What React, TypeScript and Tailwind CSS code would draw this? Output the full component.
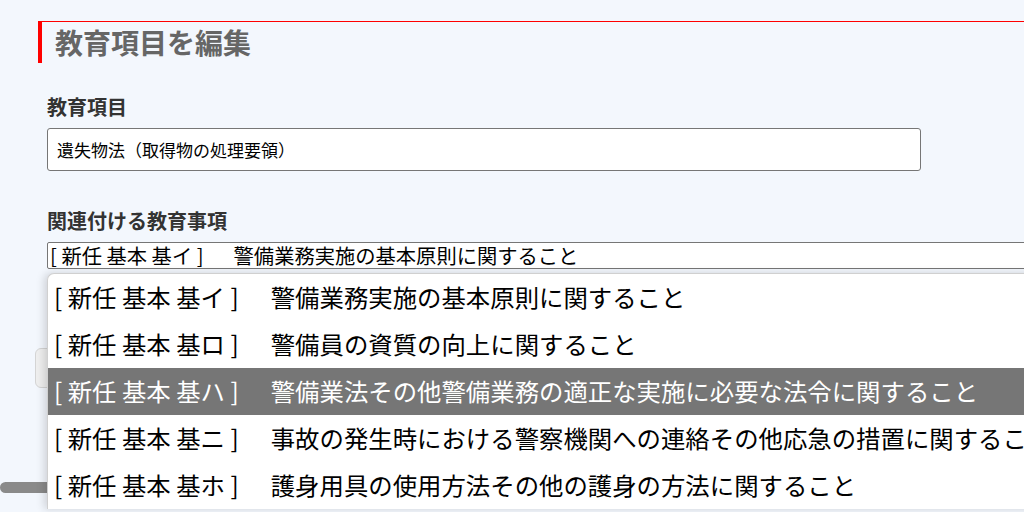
import React from 'react';

const items = [
  { code: '基イ', text: '警備業務実施の基本原則に関すること' },
  { code: '基ロ', text: '警備員の資質の向上に関すること' },
  { code: '基ハ', text: '警備業法その他警備業務の適正な実施に必要な法令に関すること' },
  { code: '基ニ', text: '事故の発生時における警察機関への連絡その他応急の措置に関すること' },
  { code: '基ホ', text: '護身用具の使用方法その他の護身の方法に関すること' },
];

const font = { fontFamily: '"Noto Sans CJK JP", "Noto Sans", sans-serif' };

export default function App() {
  const selectedIndex = 2;

  return (
    <div className="relative w-[1024px] h-[512px] overflow-hidden bg-[#f3f7fd] text-black" style={font}>
      <div className="pl-[38px] pt-[21px]">
        {/* Page title */}
        <div className="border-l-4 border-t border-[#ff0000] h-[42px] flex items-center pl-[13px]">
          <h1 className="text-[28px] font-bold text-[#666666] leading-none -mt-[2px]">教育項目を編集</h1>
        </div>

        <div className="pl-[9px]">
          <div className="mt-[34px] text-[20px] font-bold text-[#333333] leading-none">教育項目</div>
          <div className="mt-[11px] w-[874px] h-[43px] bg-white border border-[#767676] rounded-[3px] flex items-center pl-[9px] text-[17px]">
            遺失物法（取得物の処理要領）
          </div>

          <div className="mt-[40px] text-[20px] font-bold text-[#333333] leading-none">関連付ける教育事項</div>
          <div className="mt-[11px] w-[1000px] h-[27px] bg-white border border-[#767676] rounded-[2px] flex items-center pl-[2px] text-[20.3px] leading-none whitespace-nowrap">
            <span>[ 新任 基本 基イ ]</span>
            <span className="ml-[30px]">警備業務実施の基本原則に関すること</span>
          </div>

          {/* button hidden behind the open list */}
          <button aria-label="追加" className="mt-[79px] -ml-[12px] w-[120px] h-[40px] bg-[#efefef] border border-[#d4d4d4] rounded-[6px]" />
        </div>
      </div>

      {/* horizontal scrollbar */}
      <div className="absolute left-0 top-[482px] w-[200px] h-[11px] rounded-full bg-[#8a8a8a]" />

      {/* open dropdown list */}
      <div className="absolute left-[47px] top-[273px] w-[1000px] bg-white rounded-tl-[7px] border-l border-t border-[#d0d0d0] shadow-[-3px_0_8px_rgba(0,0,0,0.15)]">
        {items.map((item, i) => (
          <div
            key={item.code}
            className={`h-[47px] flex items-center pl-[6px] text-[24.4px] whitespace-nowrap ${
              i === selectedIndex ? 'bg-[#767676] text-white' : 'text-black'
            }`}
          >
            <span>[ 新任 基本 {item.code} ]</span>
            <span className="ml-[32px]">{item.text}</span>
          </div>
        ))}
      </div>
    </div>
  );
}
